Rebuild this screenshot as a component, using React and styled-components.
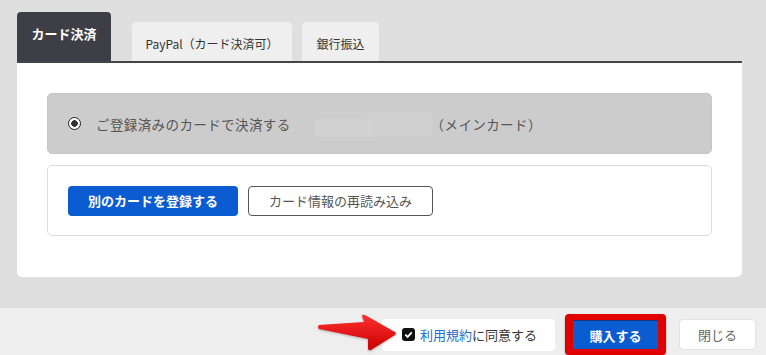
import styled, { createGlobalStyle } from "styled-components";

const Global = createGlobalStyle`
  html, body {
    margin: 0;
    padding: 0;
    background: #dfdfdf;
    font-family: "Noto Sans CJK JP", "Noto Sans", sans-serif;
  }
  #root {
    height: 355px;
    display: flex;
    flex-direction: column;
  }
`;

function App() {
  return (
    <>
      <Global />
      <Main>
        <TabBar>
          <Tab $active $w={94} $gap={21}>
            カード決済
          </Tab>
          <Tab $w={160} $gap={10}>
            PayPal（カード決済可）
          </Tab>
          <Tab $w={77}>銀行振込</Tab>
        </TabBar>
        <Panel>
          <CardRow>
            <Radio />
            <RadioLabel>ご登録済みのカードで決済する</RadioLabel>
            <Masked />
            <RadioLabel>（メインカード）</RadioLabel>
          </CardRow>
          <ButtonBox>
            <Button $primary>別のカードを登録する</Button>
            <Button>カード情報の再読み込み</Button>
          </ButtonBox>
        </Panel>
      </Main>
      <Footer>
        <Agree>
          <Arrow width="80" height="38" viewBox="0 0 80 38">
            <defs>
              <linearGradient id="ar" x1="0" y1="0" x2="0" y2="1">
                <stop offset="0" stopColor="#ff3030" />
                <stop offset="1" stopColor="#c80000" />
              </linearGradient>
            </defs>
            <path
              d="M1 11 L46 8 L44 2 Q44 0 47 1 L77 18 Q79 19 77 21 L53 36 Q50 37 50 34 L50 25 L1 15 Q-1 13 1 11 Z"
              fill="url(#ar)"
            />
          </Arrow>
          <Check>
            <svg width="9" height="9" viewBox="0 0 10 10">
              <path d="M1.5 5.2 L4 7.6 L8.6 2.6" stroke="#fff" strokeWidth="2" fill="none" />
            </svg>
          </Check>
          <span>
            <TermsLink>利用規約</TermsLink>に同意する
          </span>
        </Agree>
        <Highlight>
          <BuyButton>購入する</BuyButton>
        </Highlight>
        <CloseButton>閉じる</CloseButton>
      </Footer>
    </>
  );
}

const Main = styled.div`
  padding: 12px 24px 31px 17px;
`;

const TabBar = styled.div`
  display: flex;
  align-items: flex-end;
  border-bottom: 2px solid #44444c;
  height: 49px;
`;

const Tab = styled.div`
  width: ${(p) => p.$w}px;
  height: ${(p) => (p.$active ? 49 : 39)}px;
  margin-right: ${(p) => p.$gap || 0}px;
  box-sizing: border-box;
  padding-bottom: ${(p) => (p.$active ? 6 : 0)}px;
  padding-top: ${(p) => (p.$active ? 0 : 4)}px;
  display: flex;
  align-items: center;
  justify-content: center;
  border-radius: 4px 4px 0 0;
  background: ${(p) => (p.$active ? "#3e3e46" : "#efefef")};
  color: ${(p) => (p.$active ? "#fff" : "#333")};
  font-size: ${(p) => (p.$active ? 13 : 12)}px;
  font-weight: ${(p) => (p.$active ? 700 : 400)};
  white-space: nowrap;
`;

const Panel = styled.div`
  background: #fff;
  border-radius: 0 0 5px 5px;
  padding: 30px 30px 41px;
  height: 214px;
  box-sizing: border-box;
  display: flex;
  flex-direction: column;
  gap: 11px;
`;

const CardRow = styled.div`
  height: 61px;
  box-sizing: border-box;
  background: #cccccc;
  border: 1px solid #c6c6c6;
  border-radius: 5px;
  display: flex;
  align-items: center;
  padding-left: 20px;
`;

const Radio = styled.span`
  width: 13px;
  height: 13px;
  box-sizing: border-box;
  border-radius: 50%;
  border: 1.5px solid #222;
  background: radial-gradient(circle, #333 0 3px, #fff 3.6px);
  margin-right: 15px;
`;

const RadioLabel = styled.span`
  font-size: 13.5px;
  letter-spacing: 0.4px;
  color: #555;
`;

const Masked = styled.span`
  width: 118px;
  height: 26px;
  margin: 0 -2px 0 24px;
  background:
    linear-gradient(#d1d1d1, #d1d1d1) 0 8px / 60px 18px no-repeat,
    linear-gradient(#cfcfcf, #cfcfcf) 52px 0 / 66px 26px no-repeat,
    #cdcdcd;
`;

const ButtonBox = styled.div`
  height: 71px;
  box-sizing: border-box;
  border: 1px solid #dcdcdc;
  border-radius: 5px;
  display: flex;
  align-items: center;
  gap: 10px;
  padding-left: 20px;
`;

const Button = styled.button`
  height: 30px;
  padding: 0 20px;
  min-width: ${(p) => (p.$primary ? 170 : 183)}px;
  border-radius: 4px;
  font-family: inherit;
  font-size: 13px;
  font-weight: ${(p) => (p.$primary ? 700 : 400)};
  background: ${(p) => (p.$primary ? "#0a5cd0" : "#fff")};
  color: ${(p) => (p.$primary ? "#fff" : "#555")};
  border: ${(p) => (p.$primary ? "none" : "1px solid #555")};
`;

const Footer = styled.div`
  flex: 1;
  background: #eeeeee;
  display: flex;
  justify-content: flex-end;
  align-items: center;
  padding: 6px 10px 0 0;
`;

const Agree = styled.div`
  position: relative;
  width: 173px;
  height: 32px;
  box-sizing: border-box;
  background: #fff;
  border-radius: 4px;
  display: flex;
  align-items: center;
  gap: 5px;
  padding-left: 20px;
  font-size: 13px;
  color: #333;
  margin-right: 10px;
`;

const Arrow = styled.svg`
  position: absolute;
  left: -64px;
  top: -5px;
  filter: drop-shadow(0 1px 1px rgba(0, 0, 0, 0.25));
`;

const Check = styled.span`
  width: 13px;
  height: 13px;
  border-radius: 3px;
  background: #111;
  display: flex;
  align-items: center;
  justify-content: center;
`;

const TermsLink = styled.span`
  color: #1a6fd2;
`;

const Highlight = styled.div`
  background: #e00000;
  border-radius: 4px;
  padding: 6px 8px;
  box-shadow: 0 1px 2px rgba(0, 0, 0, 0.35);
  margin-right: 13px;
`;

const BuyButton = styled.div`
  width: 85px;
  height: 29px;
  box-sizing: border-box;
  background: #0a5cd0;
  border-top: 1px solid #123a80;
  color: #fff;
  font-size: 13px;
  font-weight: 700;
  display: flex;
  align-items: center;
  justify-content: center;
`;

const CloseButton = styled.div`
  width: 77px;
  height: 31px;
  box-sizing: border-box;
  background: #fff;
  border: 1px solid #e2e2e2;
  border-radius: 4px;
  color: #666;
  font-size: 13px;
  display: flex;
  align-items: center;
  justify-content: center;
`;

export default App;
